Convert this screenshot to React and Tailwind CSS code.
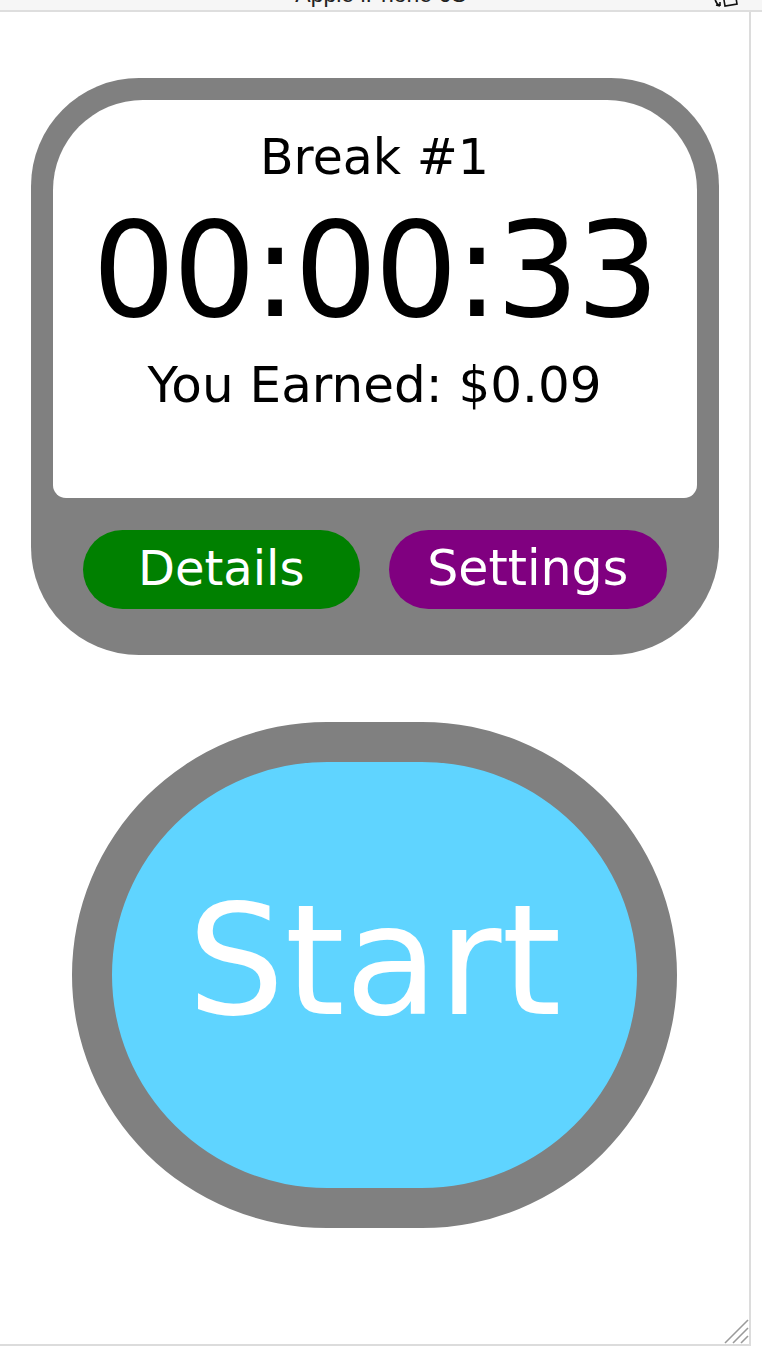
import React from 'react'

const font = { fontFamily: '"DejaVu Sans", "Noto Sans", sans-serif' }

function TopBar() {
  return (
    <div className="relative h-[12px] w-full bg-[#f6f6f6] border-b-2 border-[#dedede] overflow-hidden flex justify-center items-end">
      <span className="text-[23px] leading-none text-[#222] mb-[4px] font-['Liberation_Sans',sans-serif]">Apple iPhone 6S</span>
      {/* rotate device icon, mostly cut off */}
      <svg className="absolute right-[20px] -top-[16px]" width="30" height="24" viewBox="0 0 30 24" fill="none" stroke="#111" strokeWidth="1.6">
        <path d="M10 4 L22 2 L25 20 L13 22 Z" />
        <path d="M4 8 C2 14 3 19 8 22 M8 22 L4 21 M8 22 L8 18" />
      </svg>
    </div>
  )
}

function ResizeHandle() {
  return (
    <svg className="absolute right-0 bottom-0" width="26" height="26" viewBox="0 0 26 26" stroke="#9a9a9a" strokeWidth="1.6">
      <line x1="2" y1="25" x2="25" y2="2" />
      <line x1="10" y1="25" x2="25" y2="10" />
      <line x1="18" y1="25" x2="25" y2="18" />
    </svg>
  )
}

export default function App() {
  return (
    <div className="w-[762px] h-[1348px] bg-white overflow-hidden" style={font}>
      <TopBar />
      <div className="relative w-[751px] h-[1334px] border-r-2 border-b-2 border-[#dcdcdc] flex flex-col items-center pt-[66px]">
        {/* timer panel */}
        <div className="w-[688px] bg-[#808080] rounded-[108px] p-[22px] pb-[46px] flex flex-col">
          <div className="h-[398px] bg-white rounded-t-[90px] rounded-b-[13px] flex flex-col items-center pt-[33px] text-black">
            <div className="text-[49px] leading-none">Break #1</div>
            <div className="text-[131px] leading-none mt-[23px] tracking-[-3px]">00:00:33</div>
            <div className="text-[50px] leading-none mt-[24px]">You Earned: $0.09</div>
          </div>
          <div className="flex gap-[29px] px-[30px] mt-[32px]">
            <button className="flex-1 h-[79px] rounded-full bg-[#008000] text-white text-[48px] leading-none flex items-center justify-center pb-[3px]">
              Details
            </button>
            <button className="flex-1 h-[79px] rounded-full bg-[#800080] text-white text-[49px] leading-none flex items-center justify-center pb-[3px]">
              Settings
            </button>
          </div>
        </div>

        {/* start button */}
        <button className="mt-[67px] w-[605px] h-[506px] rounded-[255px/253px] border-[40px] border-[#808080] bg-[#5fd4ff] text-white flex items-center justify-center pb-[27px]">
          <span className="text-[153px] leading-none">Start</span>
        </button>

        <ResizeHandle />
      </div>
    </div>
  )
}
